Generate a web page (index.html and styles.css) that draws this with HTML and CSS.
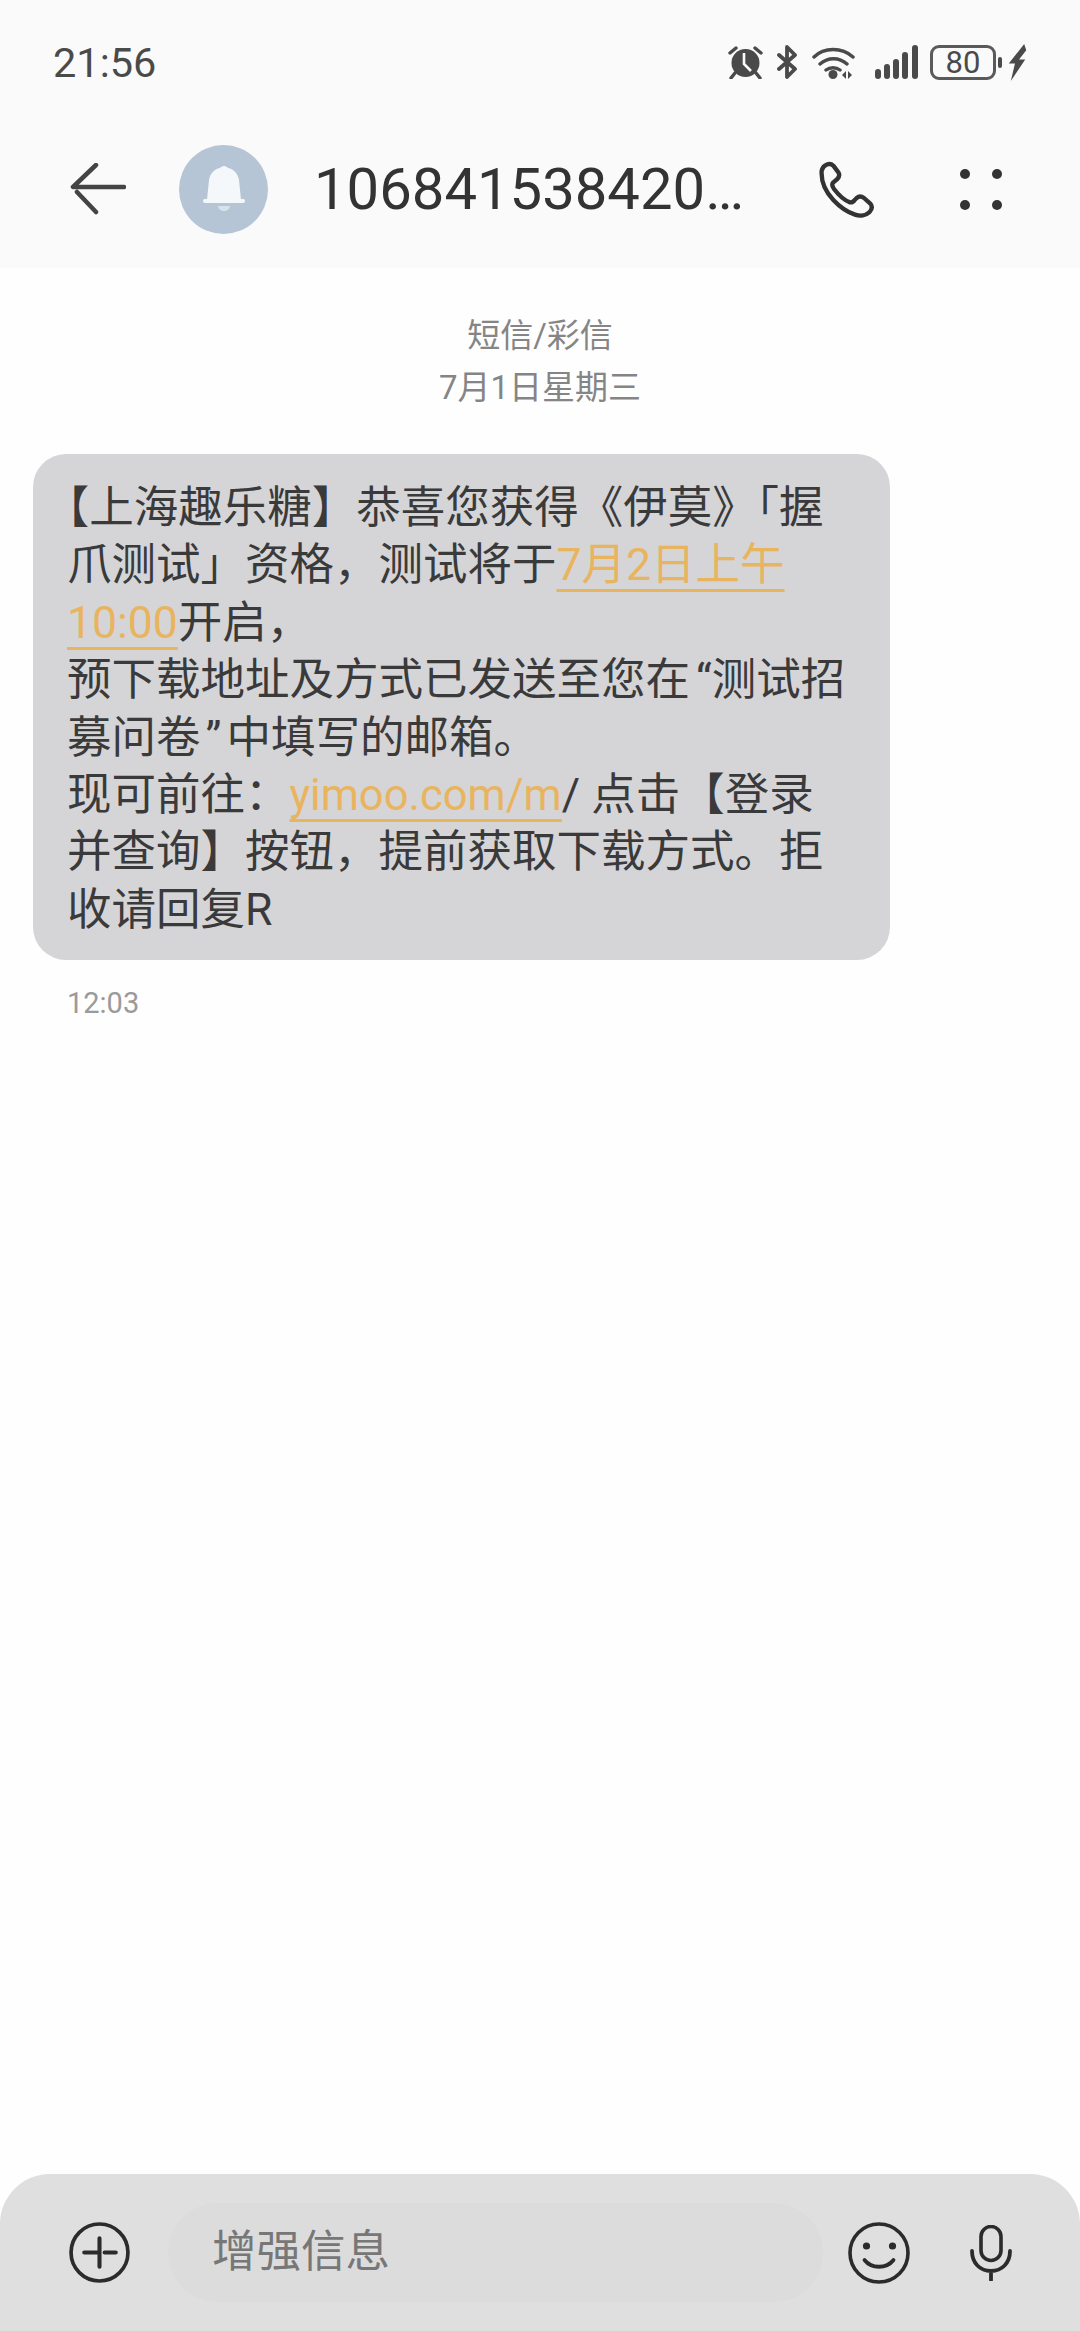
FILE: index.html
```html
<!DOCTYPE html>
<html lang="zh-CN">

<head>
    <meta charset="UTF-8">
    <meta name="viewport" content="width=device-width, initial-scale=1.0">
    <title>短信</title>
    <link rel="stylesheet" href="styles.css">
</head>

<body>
    <header class="top">
        <div class="status">
            <span class="time">21:56</span>
            <div class="status-icons">
                <svg class="ic-alarm" width="35" height="34" viewBox="0 0 35 34">
                    <circle cx="17.5" cy="18" r="14" fill="#4a4a4a" />
                    <path d="M16 8v11l7 7" fill="none" stroke="#fafafa" stroke-width="2.6" />
                    <path d="M2 8l6-5M33 8l-6-5M7 28l-4 5M28 28l4 5" fill="none" stroke="#4a4a4a" stroke-width="3.4" stroke-linecap="round" />
                </svg>
                <svg class="ic-bt" width="21" height="34" viewBox="0 0 21 34">
                    <path d="M2 10l16 14-8 8V2l8 8L2 24" fill="none" stroke="#4a4a4a" stroke-width="3.8" stroke-linejoin="round" stroke-linecap="round" />
                </svg>
                <svg class="ic-wifi" width="43" height="33" viewBox="0 0 43 33">
                    <path d="M2 11C12 1 30 1 41 11M8 18c8-7 19-7 27 0M14 24c4-3 10-3 14 0" fill="none" stroke="#4a4a4a" stroke-width="3.4" stroke-linecap="round" />
                    <circle cx="21" cy="28.500" r="4.500" fill="#4a4a4a" />
                    <path d="M34 25v8l-4-4zM36 25v8l4-4z" fill="#4a4a4a" />
                </svg>
                <svg class="ic-signal" width="43" height="34" viewBox="0 0 43 34">
                    <rect x="0" y="24" width="6" height="10" rx="3" fill="#4a4a4a" />
                    <rect x="9" y="19" width="6" height="15" rx="3" fill="#4a4a4a" />
                    <rect x="18" y="14" width="6" height="20" rx="3" fill="#4a4a4a" />
                    <rect x="27" y="7" width="6" height="27" rx="3" fill="#4a4a4a" />
                    <rect x="37" y="0" width="6" height="34" rx="3" fill="#4a4a4a" />
                </svg>
                <div class="battery"><span>80</span></div>
                <span class="battery-tip"></span>
                <svg class="ic-bolt" width="20" height="37" viewBox="0 0 18 36">
                    <path d="M16 0L1 19h6L3 36l14-21h-6l7-9z" fill="#4a4a4a" />
                </svg>
            </div>
        </div>
        <div class="toolbar">
            <svg class="back" width="56" height="52" viewBox="0 0 56 52">
                <path d="M26 2L3 24h51M26 49L7 29" fill="none" stroke="#444" stroke-width="4.500" stroke-linecap="round" stroke-linejoin="round" />
            </svg>
            <div class="avatar">
                <svg width="44" height="48" viewBox="0 0 44 48">
                    <path d="M22 1c2 0 3 1 4 2 6 1 10 6 11 12l2 20H5l2-20C8 9 12 4 18 3c1-1 2-2 4-2z" fill="#f5f8fb" />
                    <rect x="1" y="34" width="42" height="4" rx="2" fill="#f5f8fb" />
                    <path d="M16 41h12c-1 4-3 5-6 5s-5-1-6-5z" fill="#d8e2ea" />
                </svg>
            </div>
            <h1 class="title">106841538420…</h1>
            <svg class="phone" width="60" height="59" viewBox="108 88 180 177">
                <path d="M125 120C130 100 150 95 160 105L175 125C180 132 178 138 172 145L160 155C155 160 157 168 162 175C175 192 195 210 210 215C216 216 220 214 224 208L230 202C236 197 245 197 252 202L270 218C277 225 277 235 268 245C258 255 240 257 225 252C190 240 120 190 125 120Z" fill="none" stroke="#333" stroke-width="13" stroke-linejoin="round" />
            </svg>
            <div class="more">
                <span></span><span></span><span></span><span></span>
            </div>
        </div>
    </header>

    <main class="thread">
        <div class="thread-head">
            <div>短信/彩信</div>
            <div>7月1日星期三</div>
        </div>
        <div class="bubble">【上海趣乐糖】恭喜您获得《伊莫》「握<br>爪测试」资格，测试将于<a class="link">7月2日上午</a><br><a class="link">10:00</a>开启，<br>预下载地址及方式已发送至您在<span class="quote-open">“</span>测试招<br>募问卷<span class="quote-close">”</span>中填写的邮箱。<br>现可前往：<a class="link link-latin">yimoo.com/m</a>/ 点击【登录<br>并查询】按钮，提前获取下载方式。拒<br>收请回复R</div>
        <div class="stamp">12:03</div>
    </main>

    <footer class="composer">
        <svg width="61" height="61" viewBox="0 0 60 60">
            <circle cx="30" cy="30" r="28" fill="none" stroke="#2b2b2b" stroke-width="3.600" />
            <path d="M30 16v28M15 30h15M35 30h11" fill="none" stroke="#2b2b2b" stroke-width="4" stroke-linecap="round" />
        </svg>
        <div class="input">增强信息</div>
        <svg class="smile" width="62" height="62" viewBox="0 0 62 62">
            <circle cx="31" cy="31" r="29" fill="none" stroke="#2b2b2b" stroke-width="3.600" />
            <circle cx="18.500" cy="24" r="3.600" fill="#2b2b2b" />
            <circle cx="44.500" cy="24" r="3.600" fill="#2b2b2b" />
            <path d="M16.500 38c7 9 22 9 29 0" fill="none" stroke="#2b2b2b" stroke-width="3.800" stroke-linecap="round" />
        </svg>
        <svg class="mic" width="42" height="56" viewBox="0 0 42 56">
            <rect x="11" y="1.500" width="20" height="34" rx="10" fill="none" stroke="#2b2b2b" stroke-width="3.600" />
            <path d="M2 26c0 12 8 20 19 20s19-8 19-20M21 46v9" fill="none" stroke="#2b2b2b" stroke-width="3.800" stroke-linecap="round" />
        </svg>
    </footer>
</body>

</html>
```

FILE: styles.css
```css
html,
body {
    margin: 0;
    height: 100%;
}

body {
    display: flex;
    flex-direction: column;
    height: 2331px;
    background-color: #fefefe;
    font-family: Roboto, "Noto Sans CJK SC", sans-serif;
    color: #333;
}

svg {
    display: block;
    flex: none;
}

.top {
    height: 268px;
    background-color: #fafafa;
}

.status {
    display: flex;
    align-items: center;
    justify-content: space-between;
    height: 124px;
    padding: 0 53px;
}

.time {
    font-size: 41.500px;
    color: #4a4a4a;
}

.status-icons {
    display: flex;
    align-items: center;
}

.ic-bt {
    margin-left: 14px;
}

.ic-wifi {
    margin-left: 14px;
}

.ic-signal {
    margin-left: 20px;
}

.battery {
    display: flex;
    align-items: center;
    justify-content: center;
    box-sizing: border-box;
    width: 66px;
    height: 35px;
    margin-left: 12px;
    border: 3px solid #5a5a5a;
    border-radius: 9px;
    font-size: 31px;
    color: #4a4a4a;
}

.battery-tip {
    width: 4px;
    height: 11px;
    margin-left: 2px;
    border-radius: 2px;
    background-color: #4a4a4a;
}

.ic-bolt {
    margin-left: 5px;
}

.toolbar {
    display: flex;
    align-items: center;
    height: 130px;
    padding-left: 70px;
}

.avatar {
    display: flex;
    align-items: center;
    justify-content: center;
    width: 89px;
    height: 89px;
    margin-left: 53px;
    border-radius: 50%;
    background-color: #b5c5d5;
}

.title {
    width: 502px;
    margin: 0 0 0 46px;
    font-size: 58px;
    font-weight: 400;
    white-space: nowrap;
    color: #333;
}

.more {
    display: grid;
    grid-template-columns: 10px 10px;
    gap: 21px 22px;
    margin-left: 84px;
}

.more span {
    width: 10px;
    height: 10px;
    border-radius: 50%;
    background-color: #333;
}

.thread {
    flex: 1;
}

.thread-head {
    padding-top: 42px;
    font-size: 33px;
    line-height: 52px;
    text-align: center;
    color: #858585;
}

.bubble {
    box-sizing: border-box;
    width: 857px;
    margin: 40px 0 0 33px;
    padding: 26px 20px 21px 34px;
    border-radius: 33px;
    background-color: #d5d5d8;
    font-size: 44.500px;
    line-height: 57.400px;
    white-space: nowrap;
    text-spacing-trim: trim-start;
    color: #3a3a3a;
}

.quote-open {
    margin-left: 6px;
}

.quote-close {
    margin: 0 5px;
}

.link {
    color: #e8b45e;
    text-decoration: underline;
    text-decoration-thickness: 3px;
    text-underline-offset: 9px;
}

.link-latin {
    font-size: 43.500px;
}

.stamp {
    margin: 26px 0 0 67px;
    font-size: 29px;
    color: #9a9a9a;
}

.composer {
    display: flex;
    align-items: center;
    box-sizing: border-box;
    height: 157px;
    padding: 0 68px 0 69px;
    border-radius: 50px 50px 0 0;
    background-color: #dfdfdf;
}

.input {
    box-sizing: border-box;
    width: 660px;
    height: 99px;
    margin-left: 38px;
    padding-left: 44px;
    border-radius: 50px;
    background-color: #dcdcdc;
    font-size: 44.500px;
    line-height: 99px;
    color: #777;
}

.smile {
    margin-left: 25px;
}

.mic {
    margin-left: 60px;
}
```
